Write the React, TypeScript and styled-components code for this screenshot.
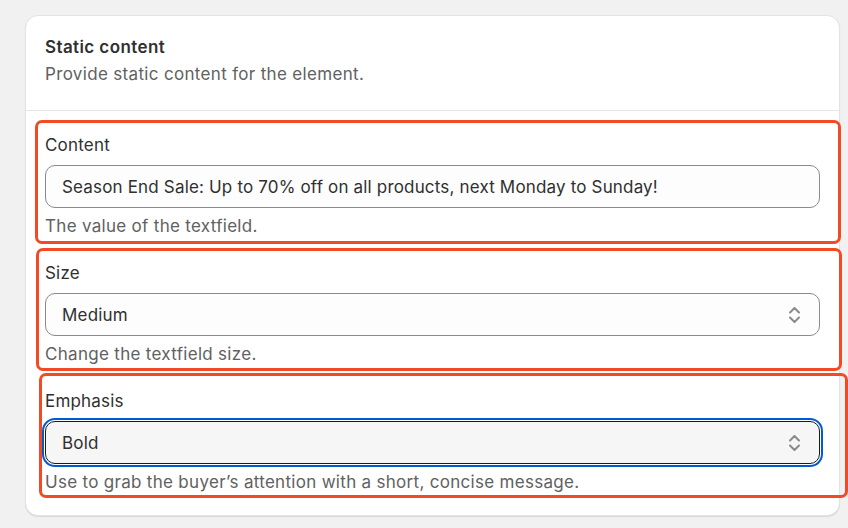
import styled, { createGlobalStyle } from 'styled-components'

const GlobalStyle = createGlobalStyle`
	html, body {
		margin: 0;
		padding: 0;
		background: #f1f1f1;
	}
	body {
		font-family: Inter, "Noto Sans", "Liberation Sans", sans-serif;
		color: #303030;
		letter-spacing: 0.2px;
		-webkit-font-smoothing: antialiased;
	}
`

const Page = styled.div`
	padding: 15px 9px 13px 25px;
`

const Card = styled.section`
	width: 815px;
	box-sizing: border-box;
	background: #ffffff;
	border: 1px solid #e3e3e3;
	border-radius: 13px;
	box-shadow: 0 1px 1px rgba(0, 0, 0, 0.1);
`

const Header = styled.header`
	display: flex;
	flex-direction: column;
	gap: 3px;
	padding: 19px 19px 24px;
	border-bottom: 1px solid #e6e6e6;
`

const Title = styled.h2`
	margin: 0;
	font-size: 17px;
	line-height: 24px;
	font-weight: 600;
	letter-spacing: 0.4px;
	color: #303030;
`

const Subtitle = styled.p`
	margin: 0;
	font-size: 17px;
	line-height: 24px;
	letter-spacing: 0.33px;
	color: #616161;
`

const Body = styled.div`
	display: flex;
	flex-direction: column;
	gap: 23px;
	padding: 22px 19px 21px;
`

type Box = { $top: number; $bottom: number; $left: number; $right: number }

const Field = styled.div<Box>`
	position: relative;
	display: flex;
	flex-direction: column;

	&::after {
		content: "";
		position: absolute;
		top: ${p => p.$top}px;
		bottom: ${p => p.$bottom}px;
		left: ${p => p.$left}px;
		right: ${p => p.$right}px;
		border: 3px solid #f24a24;
		border-radius: 7px;
		pointer-events: none;
	}
`

const Label = styled.label`
	font-size: 17px;
	line-height: 24px;
	color: #303030;
	margin-bottom: 8px;
`

const Help = styled.span`
	font-size: 17px;
	line-height: 24px;
	letter-spacing: 0.3px;
	color: #616161;
	margin-top: 6px;
`

const TextInput = styled.input`
	box-sizing: border-box;
	width: 100%;
	height: 43px;
	margin: 0;
	padding: 0 16px;
	border: 1px solid #8a8a8a;
	border-radius: 10px;
	background: #fdfdfd;
	font-family: inherit;
	font-size: 17px;
	letter-spacing: 0.17px;
	color: #303030;
	outline: none;
`

const SelectBox = styled.div<{ $focused?: boolean }>`
	box-sizing: border-box;
	height: 43px;
	display: flex;
	align-items: center;
	justify-content: space-between;
	padding: 0 18px 0 16px;
	border: 1px solid ${p => (p.$focused ? '#1a1a1a' : '#8a8a8a')};
	border-radius: 10px;
	background: ${p => (p.$focused ? '#f6f6f6' : '#fdfdfd')};
	font-size: 17px;
	color: #303030;
	box-shadow: ${p => (p.$focused ? '0 0 0 1px #ffffff, 0 0 0 3px #005bd3' : 'none')};
`

const Chevrons = () => (
	<svg width="13" height="18" viewBox="0 0 13 18" fill="none">
		<path d="M2 6.5 6.5 2 11 6.5" stroke="#8a8a8a" strokeWidth="2" strokeLinecap="round" strokeLinejoin="round" />
		<path d="M2 11.5 6.5 16 11 11.5" stroke="#8a8a8a" strokeWidth="2" strokeLinecap="round" strokeLinejoin="round" />
	</svg>
)

const App = () => {
	return (
		<>
			<GlobalStyle />
			<Page>
				<Card>
					<Header>
						<Title>Static content</Title>
						<Subtitle>Provide static content for the element.</Subtitle>
					</Header>
					<Body>
						<Field $top={-13} $bottom={-6} $left={-10} $right={-21}>
							<Label>Content</Label>
							<TextInput
								readOnly
								defaultValue="Season End Sale: Up to 70% off on all products, next Monday to Sunday!"
							/>
							<Help>The value of the textfield.</Help>
						</Field>
						<Field $top={-13} $bottom={-5} $left={-9} $right={-22}>
							<Label>Size</Label>
							<SelectBox>
								<span>Medium</span>
								<Chevrons />
							</SelectBox>
							<Help>Change the textfield size.</Help>
						</Field>
						<Field $top={-16} $bottom={-4} $left={-6} $right={-28}>
							<Label>Emphasis</Label>
							<SelectBox $focused>
								<span>Bold</span>
								<Chevrons />
							</SelectBox>
							<Help>Use to grab the buyer’s attention with a short, concise message.</Help>
						</Field>
					</Body>
				</Card>
			</Page>
		</>
	)
}

export default App
